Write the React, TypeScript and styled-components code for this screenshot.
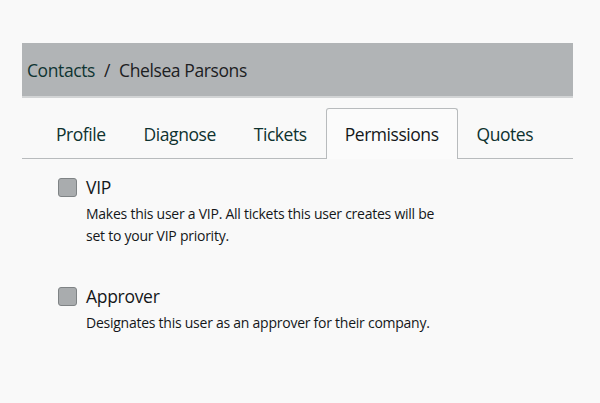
import React, { useState } from "react";
import styled, { createGlobalStyle } from "styled-components";

const GlobalStyle = createGlobalStyle`
  html, body {
    margin: 0;
    padding: 0;
    background: #f9f9f9;
    font-family: "Open Sans", "Noto Sans", sans-serif;
  }
`;

const tabs = ["Profile", "Diagnose", "Tickets", "Permissions", "Quotes"];

const permissions = [
  {
    id: "vip",
    label: "VIP",
    text: "Makes this user a VIP. All tickets this user creates will be set to your VIP priority.",
  },
  {
    id: "approver",
    label: "Approver",
    text: "Designates this user as an approver for their company.",
  },
];

export default function App() {
  const [active, setActive] = useState("Permissions");
  const [checked, setChecked] = useState<Record<string, boolean>>({});

  return (
    <>
      <GlobalStyle />
      <Page>
        <Header>
          <Crumb>Contacts</Crumb>
          <Separator>/</Separator>
          <Current>Chelsea Parsons</Current>
        </Header>
        <TabBar>
          {tabs.map((t) => (
            <Tab key={t} active={t === active} onClick={() => setActive(t)}>
              {t}
            </Tab>
          ))}
        </TabBar>
        <List>
          {permissions.map((p) => (
            <Item key={p.id}>
              <Box
                checked={!!checked[p.id]}
                onClick={() =>
                  setChecked((c) => ({ ...c, [p.id]: !c[p.id] }))
                }
              />
              <ItemBody>
                <ItemLabel>{p.label}</ItemLabel>
                <ItemText>{p.text}</ItemText>
              </ItemBody>
            </Item>
          ))}
        </List>
      </Page>
    </>
  );
}

const Page = styled.div`
  margin: 43px 27px 0 22px;
  width: 551px;
`;

const Header = styled.div`
  display: flex;
  align-items: center;
  height: 53px;
  padding-left: 5px;
  background: #b1b4b6;
  border-bottom: 2px solid #d2d4d5;
  font-size: 17.5px;
  letter-spacing: -0.4px;
`;

const Crumb = styled.span`
  color: #0f3532;
`;

const Separator = styled.span`
  color: #1c2022;
  margin: 0 9px;
`;

const Current = styled.span`
  color: #1c2022;
`;

const TabBar = styled.div`
  display: flex;
  margin-top: 10px;
  padding-left: 15px;
  border-bottom: 1px solid #b8bbbd;
`;

const Tab = styled.div<{ active?: boolean }>`
  display: flex;
  align-items: center;
  padding: 0 18px;
  font-size: 17.5px;
  letter-spacing: -0.45px;
  color: ${(p) => (p.active ? "#141719" : "#0e322f")};
  cursor: pointer;
  border: 1px solid ${(p) => (p.active ? "#b8bbbd" : "transparent")};
  border-bottom: none;
  border-radius: 3px 3px 0 0;
  background: ${(p) => (p.active ? "#fbfbfb" : "transparent")};
  margin-bottom: ${(p) => (p.active ? "-1px" : "0")};
  height: ${(p) => (p.active ? "50px" : "49px")};
`;

const List = styled.div`
  display: flex;
  flex-direction: column;
  gap: 39px;
  padding: 18px 0 0 36px;
`;

const Item = styled.div`
  display: flex;
  align-items: flex-start;
  gap: 9px;
`;

const Box = styled.div<{ checked?: boolean }>`
  width: 17px;
  height: 17px;
  margin-top: 1px;
  flex-shrink: 0;
  border: 1px solid #7f8385;
  border-radius: 3px;
  background: ${(p) => (p.checked ? "#5f6365" : "#a9acae")};
  cursor: pointer;
`;

const ItemBody = styled.div`
  display: flex;
  flex-direction: column;
`;

const ItemLabel = styled.div`
  font-size: 17.5px;
  line-height: 20px;
  letter-spacing: -0.3px;
  color: #141719;
`;

const ItemText = styled.div`
  margin-top: 6px;
  width: 360px;
  font-size: 14px;
  line-height: 22px;
  letter-spacing: -0.25px;
  color: #141719;
`;
